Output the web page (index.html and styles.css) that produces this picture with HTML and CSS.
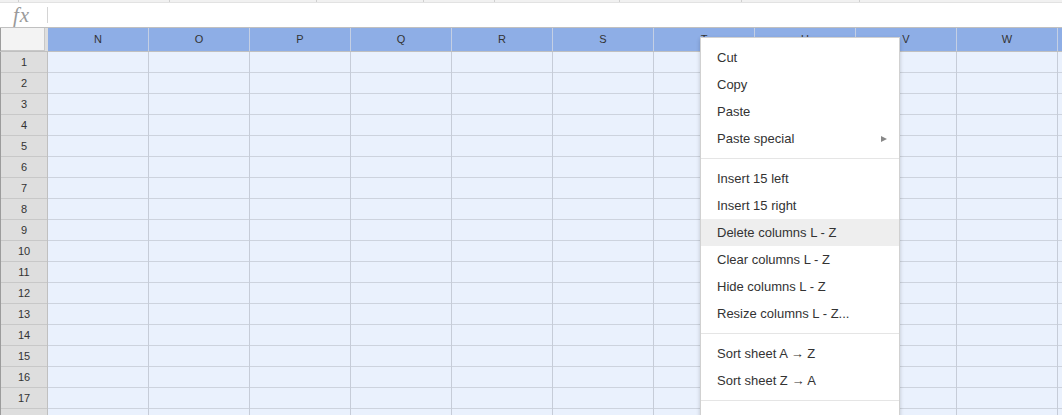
FILE: index.html
```html
<!DOCTYPE html>
<html>
<head>
<meta charset="utf-8">
<link rel="stylesheet" href="styles.css">
</head>
<body>
<div class="app">
  <div class="toolbar">
    <span class="tb" style="width:19px"></span>
    <span class="tb" style="width:151px"></span>
    <span class="tb" style="width:147px"></span>
    <span class="tb" style="width:107px"></span>
    <span class="tb" style="width:71px"></span>
    <span class="tb" style="width:125px"></span>
    <span class="tb" style="width:122px"></span>
    <span class="tb" style="width:118px"></span>
  </div>
  <div class="formula">
    <span class="fx">fx</span>
    <span class="fdiv"></span>
  </div>
  <div class="sheet">
    <div class="hrow">
      <div class="corner"></div>
      <div class="ch">N</div><div class="ch">O</div><div class="ch">P</div><div class="ch">Q</div><div class="ch">R</div><div class="ch">S</div><div class="ch">T</div><div class="ch">U</div><div class="ch">V</div><div class="ch">W</div><div class="ch"></div>
    </div>
    <div class="body">
      <div class="rh">
        <div>1</div><div>2</div><div>3</div><div>4</div><div>5</div><div>6</div><div>7</div><div>8</div><div>9</div><div>10</div><div>11</div><div>12</div><div>13</div><div>14</div><div>15</div><div>16</div><div>17</div><div></div>
      </div>
      <div class="cells"></div>
    </div>
  </div>
  <div class="menu">
    <div class="mi">Cut</div>
    <div class="mi">Copy</div>
    <div class="mi">Paste</div>
    <div class="mi sub">Paste special<span class="arr"></span></div>
    <div class="sep"></div>
    <div class="mi">Insert 15 left</div>
    <div class="mi">Insert 15 right</div>
    <div class="mi hl">Delete columns L - Z</div>
    <div class="mi">Clear columns L - Z</div>
    <div class="mi">Hide columns L - Z</div>
    <div class="mi">Resize columns L - Z...</div>
    <div class="sep"></div>
    <div class="mi">Sort sheet A → Z</div>
    <div class="mi">Sort sheet Z → A</div>
    <div class="sep"></div>
    <div class="mi blank"></div>
  </div>
</div>
</body>
</html>
```

FILE: styles.css
```css
html, body {
  margin: 0;
  padding: 0;
  width: 1062px;
  height: 415px;
  overflow: hidden;
  background: #fff;
  font-family: "Liberation Sans", Arial, sans-serif;
}
.app {
  position: relative;
  width: 1062px;
  height: 415px;
  overflow: hidden;
}
.toolbar {
  display: flex;
  height: 2px;
  background: #f1f1f1;
  border-bottom: 1px solid #e2e2e2;
}
.tb {
  flex: none;
  height: 100%;
  border-right: 1px solid #d0d0d0;
  box-sizing: border-box;
}
.formula {
  display: flex;
  align-items: center;
  height: 24px;
  border-bottom: 1px solid #c0c0c0;
  background: #fff;
}
.fx {
  width: 31px;
  margin-left: 13px;
  font-family: "Liberation Serif", "DejaVu Serif", serif;
  font-style: italic;
  font-size: 21px;
  color: #9a9a9a;
  letter-spacing: 1px;
  line-height: 24px;
}
.fdiv {
  width: 1px;
  height: 16px;
  margin-left: 3px;
  background: #d4d4d4;
}
.sheet {
  display: flex;
  flex-direction: column;
}
.hrow {
  display: flex;
  height: 23px;
  border-bottom: 1px solid #c0c0c0;
  background: #8eaee6;
}
.corner {
  flex: none;
  box-sizing: border-box;
  width: 48px;
  height: 23px;
  border-left: 1px solid #9c9c9c;
  border-right: 3px solid #dedede;
  background: #f3f3f3;
  box-shadow: inset -1px -1px 0 #c8c8c8;
}
.ch {
  flex: none;
  width: 100px;
  border-right: 1px solid #c4cfe4;
  text-align: center;
  font-size: 11px;
  line-height: 23px;
  color: #333;
}
.body {
  display: flex;
}
.rh {
  flex: none;
  width: 46px;
  border-left: 1px solid #9c9c9c;
  border-right: 1px solid #c0c0c0;
  background: #dedede;
}
.rh div {
  height: 20px;
  border-bottom: 1px solid #c8c8c8;
  text-align: center;
  font-size: 11px;
  line-height: 20px;
  color: #333;
}
.cells {
  flex: 1;
  background-color: #eaf1fd;
  background-image:
    linear-gradient(to right, transparent 100px, #c6ccd8 100px, #c6ccd8 101px),
    linear-gradient(to bottom, transparent 20px, #cdd3de 20px, #cdd3de 21px);
  background-size: 101px 100%, 100% 21px;
  background-repeat: repeat-x, repeat-y;
}
.menu {
  position: absolute;
  left: 700px;
  top: 37px;
  width: 198px;
  padding: 6px 0;
  background: #fff;
  border: 1px solid rgba(0,0,0,0.18);
  box-shadow: 0 2px 4px rgba(0,0,0,0.2);
}
.mi {
  position: relative;
  height: 27px;
  line-height: 27px;
  padding-left: 16px;
  font-size: 13px;
  color: #333;
  white-space: nowrap;
}
.mi.hl {
  background: #eeeeee;
}
.mi.blank {
  height: 60px;
}
.arr {
  position: absolute;
  right: 12px;
  top: 11px;
  width: 0;
  height: 0;
  border-top: 3px solid transparent;
  border-bottom: 3px solid transparent;
  border-left: 6px solid #888;
}
.sep {
  height: 1px;
  margin: 6px 0;
  background: #e5e5e5;
}
```
